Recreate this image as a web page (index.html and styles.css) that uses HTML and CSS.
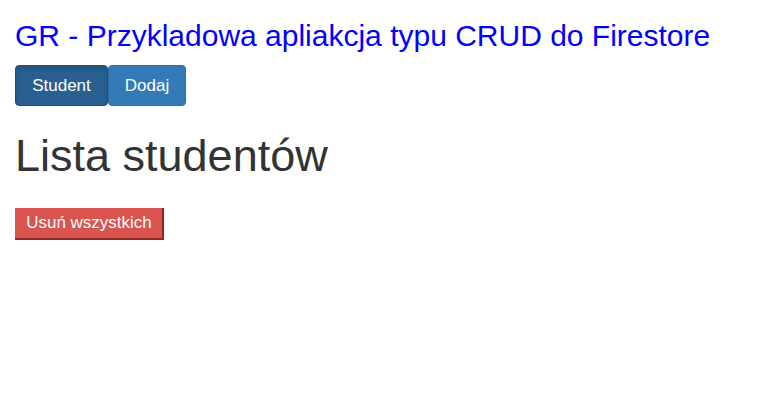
FILE: index.html
```html
<!DOCTYPE html>
<html lang="pl">
<head>
<meta charset="utf-8">
<title>GR CRUD</title>
<link rel="stylesheet" href="styles.css">
</head>
<body>
<div class="page">
  <div class="app-title">GR - Przykladowa apliakcja typu CRUD do Firestore</div>
  <nav class="nav">
    <button class="nav-btn active">Student</button>
    <button class="nav-btn">Dodaj</button>
  </nav>
  <h1 class="heading">Lista studentów</h1>
  <button class="danger-btn">Usuń wszystkich</button>
</div>
</body>
</html>
```

FILE: styles.css
```css
* { box-sizing: border-box; }
body {
  margin: 0;
  font-family: "Liberation Sans", Arial, sans-serif;
  color: #333;
  background: #fff;
}
.page {
  padding: 18px 15px;
}
.app-title {
  color: #0000ff;
  font-size: 30px;
  line-height: 36px;
}
.nav {
  display: flex;
  margin-top: 11px;
}
.nav-btn {
  font-family: inherit;
  font-size: 17px;
  color: #fff;
  background: #337ab7;
  border: 1px solid #2e6da4;
  border-radius: 4px;
  height: 41px;
  width: 78px;
  padding: 0;
  cursor: pointer;
}
.nav-btn.active {
  width: 93px;
  background: #286090;
  border-color: #204d74;
  box-shadow: inset 0 3px 5px rgba(0,0,0,.125);
}
.heading {
  font-size: 45px;
  font-weight: 400;
  line-height: 50px;
  margin: 25px 0 27px;
  color: #333;
}
.danger-btn {
  font-family: inherit;
  font-size: 17px;
  color: #fff;
  background: #d9534f;
  border: none;
  border-right: 2px solid #8f2a27;
  border-bottom: 2px solid #8f2a27;
  height: 32px;
  width: 149px;
  padding: 0 0 0 1px;
  border-radius: 0;
}
```
